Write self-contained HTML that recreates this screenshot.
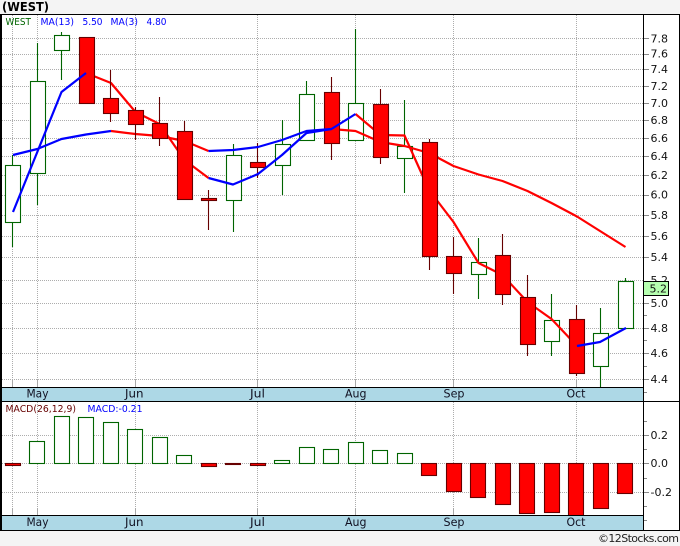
<!DOCTYPE html>
<html><head><meta charset="utf-8"><title>WEST</title>
<style>
html,body{margin:0;padding:0;background:#f4f4f4;width:680px;height:546px;overflow:hidden}
svg{display:block}
text{font-family:"DejaVu Sans","Liberation Sans",sans-serif}
.c{shape-rendering:crispEdges}
.ax text{font-size:11px;fill:#111}
.mo text{font-size:11.5px;fill:#112}
</style></head><body>
<svg width="680" height="546" viewBox="0 0 680 546" xmlns="http://www.w3.org/2000/svg">
<rect x="0" y="0" width="680" height="546" fill="#f4f4f4"/>
<rect x="0" y="14" width="680" height="516" fill="#fff"/>
<text x="2" y="11" font-size="12" font-weight="bold" fill="#000" textLength="47" lengthAdjust="spacingAndGlyphs">(WEST)</text>

<!-- grid -->
<g class="c" stroke="#adadad" stroke-width="1" stroke-dasharray="1 1" fill="none">
<path d="M2 38.5H643M2 54.5H643M2 69.5H643M2 86.5H643M2 103.5H643M2 120.5H643M2 138.5H643M2 156.5H643M2 175.5H643M2 195.5H643M2 215.5H643M2 236.5H643M2 257.5H643M2 280.5H643M2 303.5H643M2 328.5H643M2 353.5H643M2 379.5H643"/>
<path d="M12.5 15V387M37.5 15V387M135.5 15V387M257.5 15V387M355.5 15V387M453.5 15V387M576.5 15V387"/>
<path d="M2 435.5H643M2 463.5H643M2 492.5H643"/>
<path d="M12.5 402V515M37.5 402V515M135.5 402V515M257.5 402V515M355.5 402V515M453.5 402V515M576.5 402V515"/>
</g>
<g class="c" stroke="#a8a8a8" stroke-width="1" fill="none">
<path d="M12.5 379V387M37.5 379V387M135.5 379V387M257.5 379V387M355.5 379V387M453.5 379V387M576.5 379V387"/>
<path d="M12.5 508V515M37.5 508V515M135.5 508V515M257.5 508V515M355.5 508V515M453.5 508V515M576.5 508V515"/>
</g>

<!-- green candles -->
<g stroke="#006400" stroke-width="1.1" fill="#fff">
<path d="M12.5 155V247M37.5 43V205M61.5 32V80M233.5 144V232M282.5 120V195M306.5 81V140M355.5 29V140M404.5 100V193M478.5 238V299M551.5 294V356M600.5 308V387M625.5 278V328"/>
<rect x="5.5" y="165.5" width="15" height="57"/>
<rect x="30.5" y="81.5" width="15" height="92"/>
<rect x="54.5" y="35.5" width="15" height="15"/>
<rect x="226.5" y="155.5" width="15" height="45"/>
<rect x="275.5" y="144.5" width="15" height="21"/>
<rect x="299.5" y="94.5" width="15" height="46"/>
<rect x="348.5" y="103.5" width="15" height="37"/>
<rect x="397.5" y="146.5" width="15" height="12"/>
<rect x="471.5" y="262.5" width="15" height="12"/>
<rect x="544.5" y="320.5" width="15" height="21"/>
<rect x="593.5" y="333.5" width="15" height="33"/>
<rect x="618.5" y="281.5" width="15" height="47"/>
</g>

<!-- red MA lines -->
<g fill="none" stroke="#ff0000" stroke-width="2.2" stroke-linejoin="round">
<path d="M86 73L111 83L135.5 112L159.5 124L184.5 160L208.5 178"/>
<path d="M355.5 114L380.5 135L404.5 135.5L429 190L453.5 222L478.5 263L502.5 275L527.5 302L551.5 319L577 346"/>
<path d="M111 131L135.5 134L159.5 136L184.5 141L208.5 151"/>
<path d="M331.5 129L355.5 131L380.5 142L404.5 146L429 153L453.5 166L478.5 174.5L502.5 181L527.5 191L551.5 203L577 216.5L600 231L625.5 247"/>
</g>

<!-- red candles -->
<g stroke="#660000" stroke-width="1.1" fill="#ff0000">
<path d="M110.5 70V122M135.5 107V140M159.5 97V146M184.5 121V200M208.5 190V230M257.5 143V178M331.5 77V160M380.5 89V164M429.5 139V270M453.5 237V294M502.5 234V305M527.5 275V356M576.5 305V376"/>
<rect x="79.5" y="37.5" width="15" height="66"/>
<rect x="103.5" y="98.5" width="15" height="15"/>
<rect x="128.5" y="110.5" width="15" height="14"/>
<rect x="152.5" y="123.5" width="15" height="15"/>
<rect x="177.5" y="131.5" width="15" height="68"/>
<rect x="201.5" y="198.5" width="15" height="2"/>
<rect x="250.5" y="162.5" width="15" height="5"/>
<rect x="324.5" y="92.5" width="15" height="51"/>
<rect x="373.5" y="104.5" width="15" height="53"/>
<rect x="422.5" y="142.5" width="15" height="114"/>
<rect x="446.5" y="256.5" width="15" height="17"/>
<rect x="495.5" y="255.5" width="15" height="39"/>
<rect x="520.5" y="297.5" width="15" height="47"/>
<rect x="569.5" y="319.5" width="15" height="54"/>
</g>

<!-- blue MA lines -->
<g fill="none" stroke="#0000ff" stroke-width="2.2" stroke-linejoin="round">
<path d="M13 212L37.3 152L61.5 92L86 73"/>
<path d="M208.5 178L233 184.5L258 174L282 155L306.5 133L331.5 129L355.5 114"/>
<path d="M13 155L37.3 149L61.5 139L86 134.5L111 131"/>
<path d="M208.5 151L233 150L258 147L282 140L306.5 131L331.5 129"/>
<path d="M577 346L600 342L626 328"/>
</g>

<!-- MACD bars -->
<g stroke="#006400" stroke-width="1.1" fill="#fff">
<rect x="29.5" y="441.5" width="15" height="22"/>
<rect x="54.5" y="416.5" width="15" height="47"/>
<rect x="78.5" y="417.5" width="15" height="46"/>
<rect x="103.5" y="422.5" width="15" height="41"/>
<rect x="127.5" y="429.5" width="15" height="34"/>
<rect x="152.5" y="437.5" width="15" height="26"/>
<rect x="176.5" y="455.5" width="15" height="8"/>
<rect x="274.5" y="460.5" width="15" height="3"/>
<rect x="299.5" y="447.5" width="15" height="16"/>
<rect x="323.5" y="449.5" width="15" height="14"/>
<rect x="348.5" y="442.5" width="15" height="21"/>
<rect x="372.5" y="450.5" width="15" height="13"/>
<rect x="397.5" y="453.5" width="15" height="10"/>
</g>
<g stroke="#660000" stroke-width="1.1" fill="#ff0000">
<rect x="5.5" y="463.5" width="15" height="2"/>
<rect x="201.5" y="463.5" width="15" height="3"/>
<rect x="225.5" y="463.5" width="15" height="1"/>
<rect x="250.5" y="463.5" width="15" height="2"/>
<rect x="421.5" y="463.5" width="15" height="12"/>
<rect x="446.5" y="463.5" width="15" height="28"/>
<rect x="470.5" y="463.5" width="15" height="34"/>
<rect x="495.5" y="463.5" width="15" height="41"/>
<rect x="519.5" y="463.5" width="15" height="50"/>
<rect x="544.5" y="463.5" width="15" height="49"/>
<rect x="568.5" y="463.5" width="15" height="52"/>
<rect x="593.5" y="463.5" width="15" height="45"/>
<rect x="617.5" y="463.5" width="15" height="30"/>
</g>

<!-- bands -->
<g class="c">
<rect x="1" y="388" width="642" height="13" fill="#add8e6"/>
<rect x="1" y="516" width="642" height="14" fill="#add8e6"/>
<g fill="none" stroke="#000" stroke-width="1">
<path d="M0 14.5H680M0 387.5H644M0 401.5H680M0 515.5H644M0 530.5H680M643.5 14V530M679.5 14V531"/>
<path d="M0.5 14V530M1.5 14V530"/>
</g>
<g stroke="#888" stroke-width="1">
<path d="M644 38.5h5M644 54.5h5M644 69.5h5M644 86.5h5M644 103.5h5M644 120.5h5M644 138.5h5M644 156.5h5M644 175.5h5M644 195.5h5M644 215.5h5M644 236.5h5M644 257.5h5M644 303.5h5M644 315.5h3M644 328.5h5M644 340.5h3M644 353.5h5M644 366.5h3M644 379.5h5M644 392.5h3"/>
<path d="M644 421.5h3M644 435.5h5M644 449.5h3M644 463.5h5M644 478.5h3M644 492.5h5M644 506.5h3M644 520.5h3"/>
</g>
</g>

<!-- legends -->
<g font-size="10">
<text x="5.5" y="25" fill="#006400" textLength="25.5" lengthAdjust="spacingAndGlyphs">WEST</text>
<text x="40.5" y="25" fill="#0000ff" textLength="33.5" lengthAdjust="spacingAndGlyphs">MA(13)</text>
<text x="82.5" y="25" fill="#0000ff" textLength="20" lengthAdjust="spacingAndGlyphs">5.50</text>
<text x="110.5" y="25" fill="#0000ff" textLength="27.5" lengthAdjust="spacingAndGlyphs">MA(3)</text>
<text x="146.5" y="25" fill="#0000ff" textLength="20" lengthAdjust="spacingAndGlyphs">4.80</text>
<text x="5.5" y="412" fill="#660000" textLength="70.5" lengthAdjust="spacingAndGlyphs">MACD(26,12,9)</text>
<text x="87.5" y="412" fill="#0000ff" textLength="55" lengthAdjust="spacingAndGlyphs">MACD:-0.21</text>
</g>

<!-- price axis -->
<g class="ax">
<text x="650.5" y="42.5">7.8</text>
<text x="650.5" y="57.5">7.6</text>
<text x="650.5" y="73">7.4</text>
<text x="650.5" y="90">7.2</text>
<text x="650.5" y="107">7.0</text>
<text x="650.5" y="124">6.8</text>
<text x="650.5" y="142">6.6</text>
<text x="650.5" y="160">6.4</text>
<text x="650.5" y="179">6.2</text>
<text x="650.5" y="198.5">6.0</text>
<text x="650.5" y="219">5.8</text>
<text x="650.5" y="240">5.6</text>
<text x="650.5" y="261">5.4</text>
<text x="650.5" y="284">5.2</text>
<text x="650.5" y="307">5.0</text>
<text x="650.5" y="332">4.8</text>
<text x="650.5" y="357">4.6</text>
<text x="650.5" y="383">4.4</text>
<text x="650.5" y="439">0.2</text>
<text x="650.5" y="467">0.0</text>
<text x="650.5" y="496">-0.2</text>
</g>
<rect class="c" x="643.5" y="281.5" width="25" height="14" fill="#b6ffb0" stroke="#000" stroke-width="1"/>
<text x="649.5" y="292.5" font-size="11" fill="#111">5.2</text>

<!-- months -->
<g class="mo">
<text x="26.5" y="397.5" textLength="22" lengthAdjust="spacingAndGlyphs">May</text>
<text x="125" y="397.5" textLength="18.5" lengthAdjust="spacingAndGlyphs">Jun</text>
<text x="250" y="397.5" textLength="15" lengthAdjust="spacingAndGlyphs">Jul</text>
<text x="345" y="397.5" textLength="21.5" lengthAdjust="spacingAndGlyphs">Aug</text>
<text x="443.5" y="397.5" textLength="21" lengthAdjust="spacingAndGlyphs">Sep</text>
<text x="566.5" y="397.5" textLength="19" lengthAdjust="spacingAndGlyphs">Oct</text>
<text x="26.5" y="526" textLength="22" lengthAdjust="spacingAndGlyphs">May</text>
<text x="125" y="526" textLength="18.5" lengthAdjust="spacingAndGlyphs">Jun</text>
<text x="250" y="526" textLength="15" lengthAdjust="spacingAndGlyphs">Jul</text>
<text x="345" y="526" textLength="21.5" lengthAdjust="spacingAndGlyphs">Aug</text>
<text x="443.5" y="526" textLength="21" lengthAdjust="spacingAndGlyphs">Sep</text>
<text x="566.5" y="526" textLength="19" lengthAdjust="spacingAndGlyphs">Oct</text>
</g>
<text x="598" y="542" font-size="11" fill="#222" textLength="81">©12Stocks.com</text>
</svg>
</body></html>
